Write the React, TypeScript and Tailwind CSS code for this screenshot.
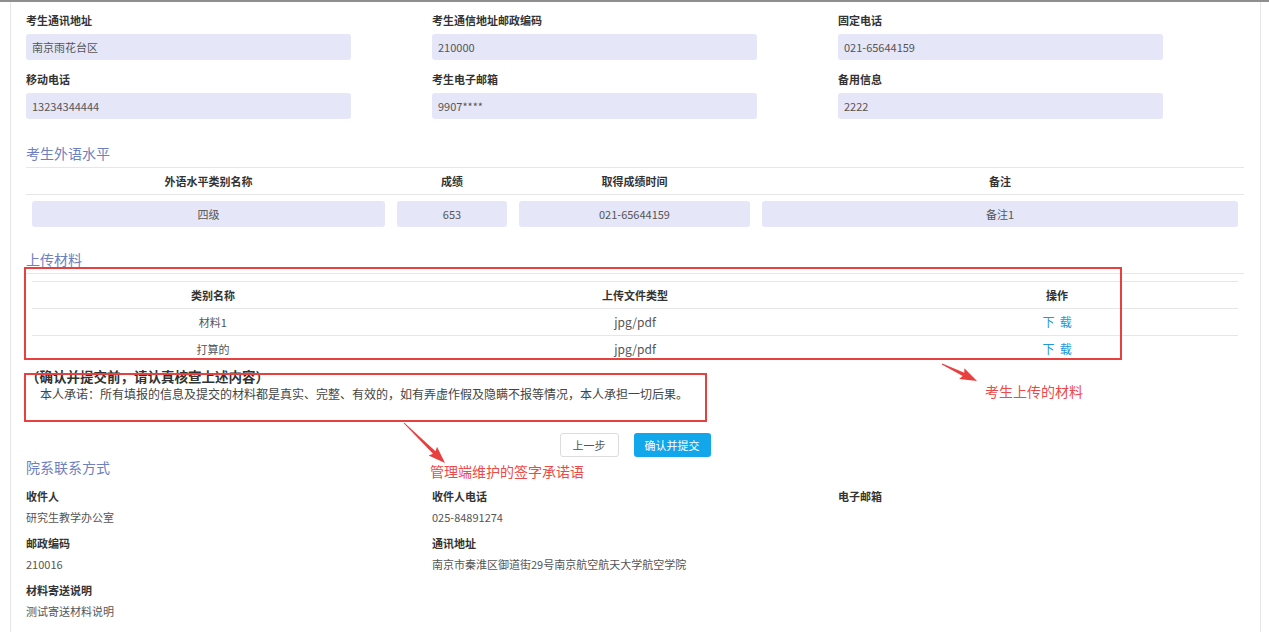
const FONT = "font-['Noto_Sans_CJK_SC','Noto_Sans',sans-serif]";

const baseInfo = [
  { label: "考生通讯地址", value: "南京雨花台区" },
  { label: "考生通信地址邮政编码", value: "210000" },
  { label: "固定电话", value: "021-65644159" },
  { label: "移动电话", value: "13234344444" },
  { label: "考生电子邮箱", value: "9907****" },
  { label: "备用信息", value: "2222" },
];

const materials = [
  { name: "材料1", type: "jpg/pdf" },
  { name: "打算的", type: "jpg/pdf" },
];

/** Label + read-only input box */
function Field({ label, value }: { label: string; value: string }) {
  return (
    <div>
      <div className="h-5 text-[11px] leading-5 font-bold text-[#333]">{label}</div>
      <div className="mt-1 h-[26px] w-[325px] rounded-[3px] bg-[#e6e6f9] px-[6px] text-[11px] leading-[26px] text-[#555]">
        {value}
      </div>
    </div>
  );
}

function SectionTitle({ children, line = true, className = "" }: { children: string; line?: boolean; className?: string }) {
  return (
    <div
      className={`text-[14px] leading-5 text-[#6d80bf] ${line ? "border-b border-[#e6e6e6] pb-1" : ""} ${className}`}
    >
      {children}
    </div>
  );
}

function Info({ label, value }: { label: string; value?: string }) {
  return (
    <div>
      <div className="h-5 text-[11px] leading-5 font-bold text-[#333]">{label}</div>
      {value && <div className="mt-px h-5 text-[11px] leading-5 text-[#555]">{value}</div>}
    </div>
  );
}

/** Red annotation arrow: thin tail widening into a head */
function Arrow({ x1, y1, x2, y2 }: { x1: number; y1: number; x2: number; y2: number }) {
  const len = Math.hypot(x2 - x1, y2 - y1);
  const dx = (x2 - x1) / len;
  const dy = (y2 - y1) / len;
  const nx = -dy;
  const ny = dx;
  const head = 15;
  const nkx = x2 - dx * head;
  const nky = y2 - dy * head;
  const pts = [
    [x1 + nx * 0.5, y1 + ny * 0.5],
    [nkx + nx * 1.8, nky + ny * 1.8],
    [nkx - dx * 2 + nx * 6, nky - dy * 2 + ny * 6],
    [x2, y2],
    [nkx - dx * 2 - nx * 6, nky - dy * 2 - ny * 6],
    [nkx - nx * 1.8, nky - ny * 1.8],
    [x1 - nx * 0.5, y1 - ny * 0.5],
  ]
    .map((p) => p.join(","))
    .join(" ");
  return <polygon points={pts} fill="#e8403f" />;
}

export default function App() {
  return (
    <div className={`relative h-[632px] w-full overflow-hidden border-t-2 border-[#8f8f8f] bg-white ${FONT}`}>
      <div className="ml-[10px] h-full w-[1251px] border-x border-[#e6e6e6] pr-[16px] pl-[15px]">
        {/* base info */}
        <div className="grid grid-cols-3 gap-y-[9px] pt-2">
          {baseInfo.map((f) => (
            <Field key={f.label} label={f.label} value={f.value} />
          ))}
        </div>

        {/* foreign language */}
        <SectionTitle className="mt-6">考生外语水平</SectionTitle>
        <div className="grid grid-cols-[365px_122px_243px_488px] text-[11px] text-[#555]">
          {["外语水平类别名称", "成绩", "取得成绩时间", "备注"].map((h) => (
            <div key={h} className="h-[27px] border-b border-[#e6e6e6] text-center leading-[27px] font-bold text-[#333]">
              {h}
            </div>
          ))}
          {["四级", "653", "021-65644159", "备注1"].map((v) => (
            <div key={v} className="px-[6px] py-[6px]">
              <div className="h-[26px] rounded-[3px] bg-[#e6e6f9] text-center leading-[26px]">{v}</div>
            </div>
          ))}
        </div>

        {/* uploads */}
        <SectionTitle className="mt-4">上传材料</SectionTitle>
        <div className="mx-[6px] mt-[7px] border-t border-[#e6e6e6] text-[11px]">
          <div className="grid h-[27px] grid-cols-[30%_40%_30%] border-b border-[#e6e6e6] text-center leading-[26px] font-bold text-[#333]">
            <div>类别名称</div>
            <div>上传文件类型</div>
            <div>操作</div>
          </div>
          {materials.map((m, i) => (
            <div
              key={m.name}
              className={`grid h-[27px] grid-cols-[30%_40%_30%] text-center leading-[26px] text-[#555] ${i === 0 ? "border-b border-[#e6e6e6]" : ""}`}
            >
              <div>{m.name}</div>
              <div className="text-[12px]">{m.type}</div>
              <div className="text-[12px] text-[#2196d9]">下&nbsp;&nbsp;载</div>
            </div>
          ))}
        </div>

        {/* promise */}
        <div className="mt-[5px] text-[13.5px] leading-[17px] font-bold text-[#333]">（确认并提交前，请认真核查上述内容）</div>
        <div className="mt-px pl-[14px] text-[12px] leading-4 text-[#444]">
          本人承诺：所有填报的信息及提交的材料都是真实、完整、有效的，如有弄虚作假及隐瞒不报等情况，本人承担一切后果。
        </div>

        <div className="mt-[31px] flex justify-center gap-[15px] text-[11px]">
          <button className="h-6 w-[59px] rounded-[3px] border border-[#dcdcdc] bg-white text-[#555]">上一步</button>
          <button className="h-6 w-[77px] rounded-[3px] bg-[#12a6ea] text-white">确认并提交</button>
        </div>

        {/* contact */}
        <SectionTitle line={false}>院系联系方式</SectionTitle>
        <div className="mt-[9px] grid grid-cols-3 gap-y-[6px]">
          <Info label="收件人" value="研究生教学办公室" />
          <Info label="收件人电话" value="025-84891274" />
          <Info label="电子邮箱" />
          <Info label="邮政编码" value="210016" />
          <Info label="通讯地址" value="南京市秦淮区御道街29号南京航空航天大学航空学院" />
          <div />
          <Info label="材料寄送说明" value="测试寄送材料说明" />
        </div>
      </div>

      {/* annotations */}
      <div className="absolute top-[265px] left-[24px] h-[93px] w-[1098px] border-2 border-[#e8403f]" />
      <div className="absolute top-[371px] left-[24px] h-[49px] w-[683px] border-2 border-[#e8403f]" />
      <svg className="pointer-events-none absolute top-[-2px] left-0" width="1269" height="632">
        <Arrow x1={942} y1={364} x2={977} y2={381} />
        <Arrow x1={404} y1={423} x2={445} y2={463} />
      </svg>
      <div className="absolute top-[379px] left-[985px] text-[14px] leading-5 text-[#ec4a48]">考生上传的材料</div>
      <div className="absolute top-[459px] left-[430px] text-[14px] leading-5 text-[#ec4a48]">管理端维护的签字承诺语</div>
    </div>
  );
}
